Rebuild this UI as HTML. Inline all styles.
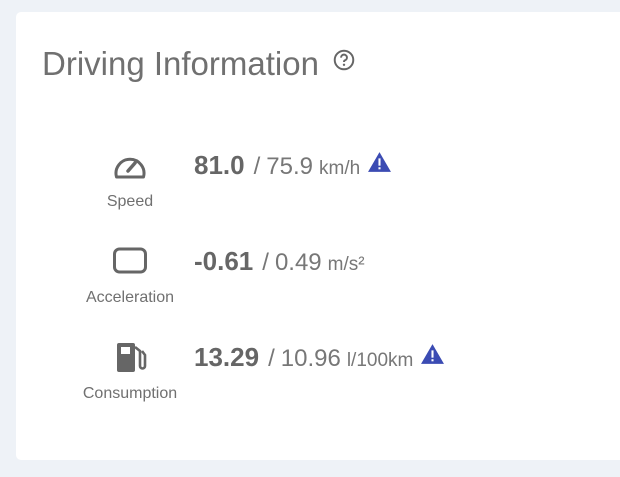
<!DOCTYPE html>
<html><head><style>
body{margin:0;width:620px;height:477px;background:#eef2f7;font-family:"Liberation Sans",sans-serif;overflow:hidden;position:relative}
.card{position:absolute;left:16px;top:12px;width:620px;height:448px;background:#fff;border-radius:5px}
.title{position:absolute;left:42px;top:45px;font-size:33px;color:#707070;white-space:nowrap}
.row{position:absolute;left:0;width:620px}
.ic{position:absolute;left:112px;width:36px;height:30px}
.lbl{position:absolute;left:60px;width:140px;text-align:center;font-size:16px;color:#707070}
.val{position:absolute;left:194px;white-space:nowrap;color:#666}
.b{font-size:26px;font-weight:bold;color:#666}
.n{font-size:24px;color:#777}
.s{margin:0 6px 0 9px}
.u{font-size:19px;color:#777;margin-left:6px}
.w{vertical-align:2px;margin-left:7px}
</style></head><body>
<div class="card"></div>
<div class="title">Driving Information <svg width="24" height="24" viewBox="0 0 22 22" style="vertical-align:3px;margin-left:4px"><circle cx="11" cy="11" r="8.5" fill="none" stroke="#666" stroke-width="1.8"/><path d="M8.3 8.8a2.7 2.7 0 1 1 3.6 2.5c-.7.3-.9.7-.9 1.5" fill="none" stroke="#666" stroke-width="1.8"/><circle cx="11" cy="15.4" r="1.1" fill="#666"/></svg></div>

<div class="row" style="top:150px">
<svg class="ic" viewBox="0 0 36 30" style="top:0"><path d="M4.5 27a14 14 0 1 1 27 0z" fill="none" stroke="#666" stroke-width="3" stroke-linejoin="round"/><path d="M16 21l7-8" stroke="#666" stroke-width="3.5" stroke-linecap="round"/></svg>
<div class="lbl" style="top:43px">Speed</div>
<div class="val" style="top:0px"><span class="b">81.0</span><span class="n"><span class="s">/</span>75.9</span><span class="u">km/h</span><svg class="w" width="25" height="21" viewBox="0 0 24 20"><path d="M12 1L23 20H1z" fill="#3b4bb3"/><rect x="11" y="7" width="2" height="7" fill="#fff"/><rect x="11" y="15.5" width="2" height="2" fill="#fff"/></svg></div>
</div>

<div class="row" style="top:246px">
<svg class="ic" viewBox="0 0 36 30" style="top:0"><rect x="2.5" y="3" width="31" height="23" rx="5" fill="none" stroke="#666" stroke-width="3"/></svg>
<div class="lbl" style="top:43px">Acceleration</div>
<div class="val" style="top:0px"><span class="b">-0.61</span><span class="n"><span class="s">/</span>0.49</span><span class="u">m/s²</span></div>
</div>

<div class="row" style="top:342px">
<svg class="ic" viewBox="0 0 36 30" style="top:0"><rect x="5" y="1" width="18" height="29" rx="2" fill="#666"/><rect x="9" y="5" width="9" height="7" fill="#fff"/><path d="M23 5l5 4v15a2.5 2.5 0 0 0 5 0v-11l-3-4" fill="none" stroke="#666" stroke-width="2.6"/></svg>
<div class="lbl" style="top:43px">Consumption</div>
<div class="val" style="top:0px"><span class="b">13.29</span><span class="n"><span class="s">/</span>10.96</span><span class="u">l/100km</span><svg class="w" width="25" height="21" viewBox="0 0 24 20"><path d="M12 1L23 20H1z" fill="#3b4bb3"/><rect x="11" y="7" width="2" height="7" fill="#fff"/><rect x="11" y="15.5" width="2" height="2" fill="#fff"/></svg></div>
</div>
</body></html>
